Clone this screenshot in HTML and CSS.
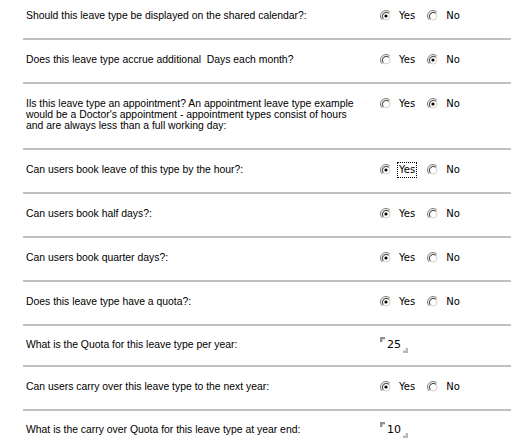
FILE: index.html
```html
<!DOCTYPE html>
<html>
<head>
<meta charset="utf-8">
<link rel="stylesheet" href="styles.css">
</head>
<body>
<div class="form">
  <div class="row first">
    <div class="label">Should this leave type be displayed on the shared calendar?:</div>
    <div class="control">
      <span class="opt"><svg class="radio" width="12" height="12" viewBox="0 0 12 12"><path d="M2.1 9.9A5.5 5.5 0 0 1 9.9 2.1" stroke="#808080" fill="none"/><circle cx="6" cy="6" r="4" fill="#fff" stroke="#d4d0c8"/><path d="M3.2 8.8A4 4 0 0 1 8.8 3.2" stroke="#404040" fill="none"/><circle cx="6" cy="6" r="1.6" fill="#000"/></svg><span class="txt">Yes</span></span>
      <span class="opt"><svg class="radio" width="12" height="12" viewBox="0 0 12 12"><path d="M2.1 9.9A5.5 5.5 0 0 1 9.9 2.1" stroke="#808080" fill="none"/><circle cx="6" cy="6" r="4" fill="#fff" stroke="#d4d0c8"/><path d="M3.2 8.8A4 4 0 0 1 8.8 3.2" stroke="#404040" fill="none"/></svg><span class="txt">No</span></span>
    </div>
  </div>
  <div class="row">
    <div class="label">Does this leave type accrue additional &nbsp;Days each month?</div>
    <div class="control">
      <span class="opt"><svg class="radio" width="12" height="12" viewBox="0 0 12 12"><path d="M2.1 9.9A5.5 5.5 0 0 1 9.9 2.1" stroke="#808080" fill="none"/><circle cx="6" cy="6" r="4" fill="#fff" stroke="#d4d0c8"/><path d="M3.2 8.8A4 4 0 0 1 8.8 3.2" stroke="#404040" fill="none"/></svg><span class="txt">Yes</span></span>
      <span class="opt"><svg class="radio" width="12" height="12" viewBox="0 0 12 12"><path d="M2.1 9.9A5.5 5.5 0 0 1 9.9 2.1" stroke="#808080" fill="none"/><circle cx="6" cy="6" r="4" fill="#fff" stroke="#d4d0c8"/><path d="M3.2 8.8A4 4 0 0 1 8.8 3.2" stroke="#404040" fill="none"/><circle cx="6" cy="6" r="1.6" fill="#000"/></svg><span class="txt">No</span></span>
    </div>
  </div>
  <div class="row">
    <div class="label">Ils this leave type an appointment? An appointment leave type example<br>would be a Doctor's appointment - appointment types consist of hours<br>and are always less than a full working day:</div>
    <div class="control">
      <span class="opt"><svg class="radio" width="12" height="12" viewBox="0 0 12 12"><path d="M2.1 9.9A5.5 5.5 0 0 1 9.9 2.1" stroke="#808080" fill="none"/><circle cx="6" cy="6" r="4" fill="#fff" stroke="#d4d0c8"/><path d="M3.2 8.8A4 4 0 0 1 8.8 3.2" stroke="#404040" fill="none"/></svg><span class="txt">Yes</span></span>
      <span class="opt"><svg class="radio" width="12" height="12" viewBox="0 0 12 12"><path d="M2.1 9.9A5.5 5.5 0 0 1 9.9 2.1" stroke="#808080" fill="none"/><circle cx="6" cy="6" r="4" fill="#fff" stroke="#d4d0c8"/><path d="M3.2 8.8A4 4 0 0 1 8.8 3.2" stroke="#404040" fill="none"/><circle cx="6" cy="6" r="1.6" fill="#000"/></svg><span class="txt">No</span></span>
    </div>
  </div>
  <div class="row">
    <div class="label">Can users book leave of this type by the hour?:</div>
    <div class="control">
      <span class="opt"><svg class="radio" width="12" height="12" viewBox="0 0 12 12"><path d="M2.1 9.9A5.5 5.5 0 0 1 9.9 2.1" stroke="#808080" fill="none"/><circle cx="6" cy="6" r="4" fill="#fff" stroke="#d4d0c8"/><path d="M3.2 8.8A4 4 0 0 1 8.8 3.2" stroke="#404040" fill="none"/><circle cx="6" cy="6" r="1.6" fill="#000"/></svg><span class="txt focus">Yes</span></span>
      <span class="opt"><svg class="radio" width="12" height="12" viewBox="0 0 12 12"><path d="M2.1 9.9A5.5 5.5 0 0 1 9.9 2.1" stroke="#808080" fill="none"/><circle cx="6" cy="6" r="4" fill="#fff" stroke="#d4d0c8"/><path d="M3.2 8.8A4 4 0 0 1 8.8 3.2" stroke="#404040" fill="none"/></svg><span class="txt">No</span></span>
    </div>
  </div>
  <div class="row">
    <div class="label">Can users book half days?:</div>
    <div class="control">
      <span class="opt"><svg class="radio" width="12" height="12" viewBox="0 0 12 12"><path d="M2.1 9.9A5.5 5.5 0 0 1 9.9 2.1" stroke="#808080" fill="none"/><circle cx="6" cy="6" r="4" fill="#fff" stroke="#d4d0c8"/><path d="M3.2 8.8A4 4 0 0 1 8.8 3.2" stroke="#404040" fill="none"/><circle cx="6" cy="6" r="1.6" fill="#000"/></svg><span class="txt">Yes</span></span>
      <span class="opt"><svg class="radio" width="12" height="12" viewBox="0 0 12 12"><path d="M2.1 9.9A5.5 5.5 0 0 1 9.9 2.1" stroke="#808080" fill="none"/><circle cx="6" cy="6" r="4" fill="#fff" stroke="#d4d0c8"/><path d="M3.2 8.8A4 4 0 0 1 8.8 3.2" stroke="#404040" fill="none"/></svg><span class="txt">No</span></span>
    </div>
  </div>
  <div class="row">
    <div class="label">Can users book quarter days?:</div>
    <div class="control">
      <span class="opt"><svg class="radio" width="12" height="12" viewBox="0 0 12 12"><path d="M2.1 9.9A5.5 5.5 0 0 1 9.9 2.1" stroke="#808080" fill="none"/><circle cx="6" cy="6" r="4" fill="#fff" stroke="#d4d0c8"/><path d="M3.2 8.8A4 4 0 0 1 8.8 3.2" stroke="#404040" fill="none"/><circle cx="6" cy="6" r="1.6" fill="#000"/></svg><span class="txt">Yes</span></span>
      <span class="opt"><svg class="radio" width="12" height="12" viewBox="0 0 12 12"><path d="M2.1 9.9A5.5 5.5 0 0 1 9.9 2.1" stroke="#808080" fill="none"/><circle cx="6" cy="6" r="4" fill="#fff" stroke="#d4d0c8"/><path d="M3.2 8.8A4 4 0 0 1 8.8 3.2" stroke="#404040" fill="none"/></svg><span class="txt">No</span></span>
    </div>
  </div>
  <div class="row">
    <div class="label">Does this leave type have a quota?:</div>
    <div class="control">
      <span class="opt"><svg class="radio" width="12" height="12" viewBox="0 0 12 12"><path d="M2.1 9.9A5.5 5.5 0 0 1 9.9 2.1" stroke="#808080" fill="none"/><circle cx="6" cy="6" r="4" fill="#fff" stroke="#d4d0c8"/><path d="M3.2 8.8A4 4 0 0 1 8.8 3.2" stroke="#404040" fill="none"/><circle cx="6" cy="6" r="1.6" fill="#000"/></svg><span class="txt">Yes</span></span>
      <span class="opt"><svg class="radio" width="12" height="12" viewBox="0 0 12 12"><path d="M2.1 9.9A5.5 5.5 0 0 1 9.9 2.1" stroke="#808080" fill="none"/><circle cx="6" cy="6" r="4" fill="#fff" stroke="#d4d0c8"/><path d="M3.2 8.8A4 4 0 0 1 8.8 3.2" stroke="#404040" fill="none"/></svg><span class="txt">No</span></span>
    </div>
  </div>
  <div class="row input-row">
    <div class="label">What is the Quota for this leave type per year:</div>
    <div class="control">
      <span class="field"><i class="c-tl"></i><span class="val">25</span><i class="c-br"></i></span>
    </div>
  </div>
  <div class="row">
    <div class="label">Can users carry over this leave type to the next year:</div>
    <div class="control">
      <span class="opt"><svg class="radio" width="12" height="12" viewBox="0 0 12 12"><path d="M2.1 9.9A5.5 5.5 0 0 1 9.9 2.1" stroke="#808080" fill="none"/><circle cx="6" cy="6" r="4" fill="#fff" stroke="#d4d0c8"/><path d="M3.2 8.8A4 4 0 0 1 8.8 3.2" stroke="#404040" fill="none"/><circle cx="6" cy="6" r="1.6" fill="#000"/></svg><span class="txt">Yes</span></span>
      <span class="opt"><svg class="radio" width="12" height="12" viewBox="0 0 12 12"><path d="M2.1 9.9A5.5 5.5 0 0 1 9.9 2.1" stroke="#808080" fill="none"/><circle cx="6" cy="6" r="4" fill="#fff" stroke="#d4d0c8"/><path d="M3.2 8.8A4 4 0 0 1 8.8 3.2" stroke="#404040" fill="none"/></svg><span class="txt">No</span></span>
    </div>
  </div>
  <div class="row input-row">
    <div class="label">What is the carry over Quota for this leave type at year end:</div>
    <div class="control">
      <span class="field"><i class="c-tl"></i><span class="val">10</span><i class="c-br"></i></span>
    </div>
  </div>
</div>
</body>
</html>
```

FILE: styles.css
```css
body {
  margin: 0;
  background: #fff;
  color: #000;
  font-family: "Liberation Sans", Arial, sans-serif;
  font-size: 10.4px;
}
.form {
  padding-left: 23px;
}
.row {
  display: grid;
  grid-template-columns: 357px 1fr;
  line-height: 11px;
  padding: 14px 0 17px;
  border-bottom: 2px solid #c0c0c0;
}
.row.first {
  padding-top: 10px;
}
.row.input-row {
  padding: 13px 0 15px;
}
.label {
  padding-left: 3px;
  white-space: nowrap;
}
.control {
  align-self: start;
  display: flex;
  align-items: center;
  height: 11px;
  font-family: "DejaVu Sans", Verdana, sans-serif;
  font-size: 10px;
}
.opt {
  display: inline-flex;
  align-items: center;
}
.opt + .opt {
  margin-left: 12px;
}
.radio {
  display: block;
  flex: none;
}
.txt {
  margin-left: 7px;
  line-height: 12px;
}
.txt.focus {
  outline: 1px dotted #000;
  outline-offset: 1px;
}
.field {
  display: inline-flex;
  height: 16px;
  align-items: stretch;
}
.c-tl,
.c-br {
  display: block;
  width: 3px;
  height: 3px;
}
.c-tl {
  align-self: flex-start;
  border-top: 2px solid #909090;
  border-left: 2px solid #909090;
  box-shadow: inset 1px 1px 0 #d0d0d0;
}
.c-br {
  align-self: flex-end;
  border-right: 2px solid #b8b8b8;
  border-bottom: 2px solid #b8b8b8;
  box-shadow: inset -1px -1px 0 #e0e0e0;
}
.val {
  align-self: center;
  font-size: 11px;
  line-height: 11px;
  margin: 0 2px 0 2px;
}
```
